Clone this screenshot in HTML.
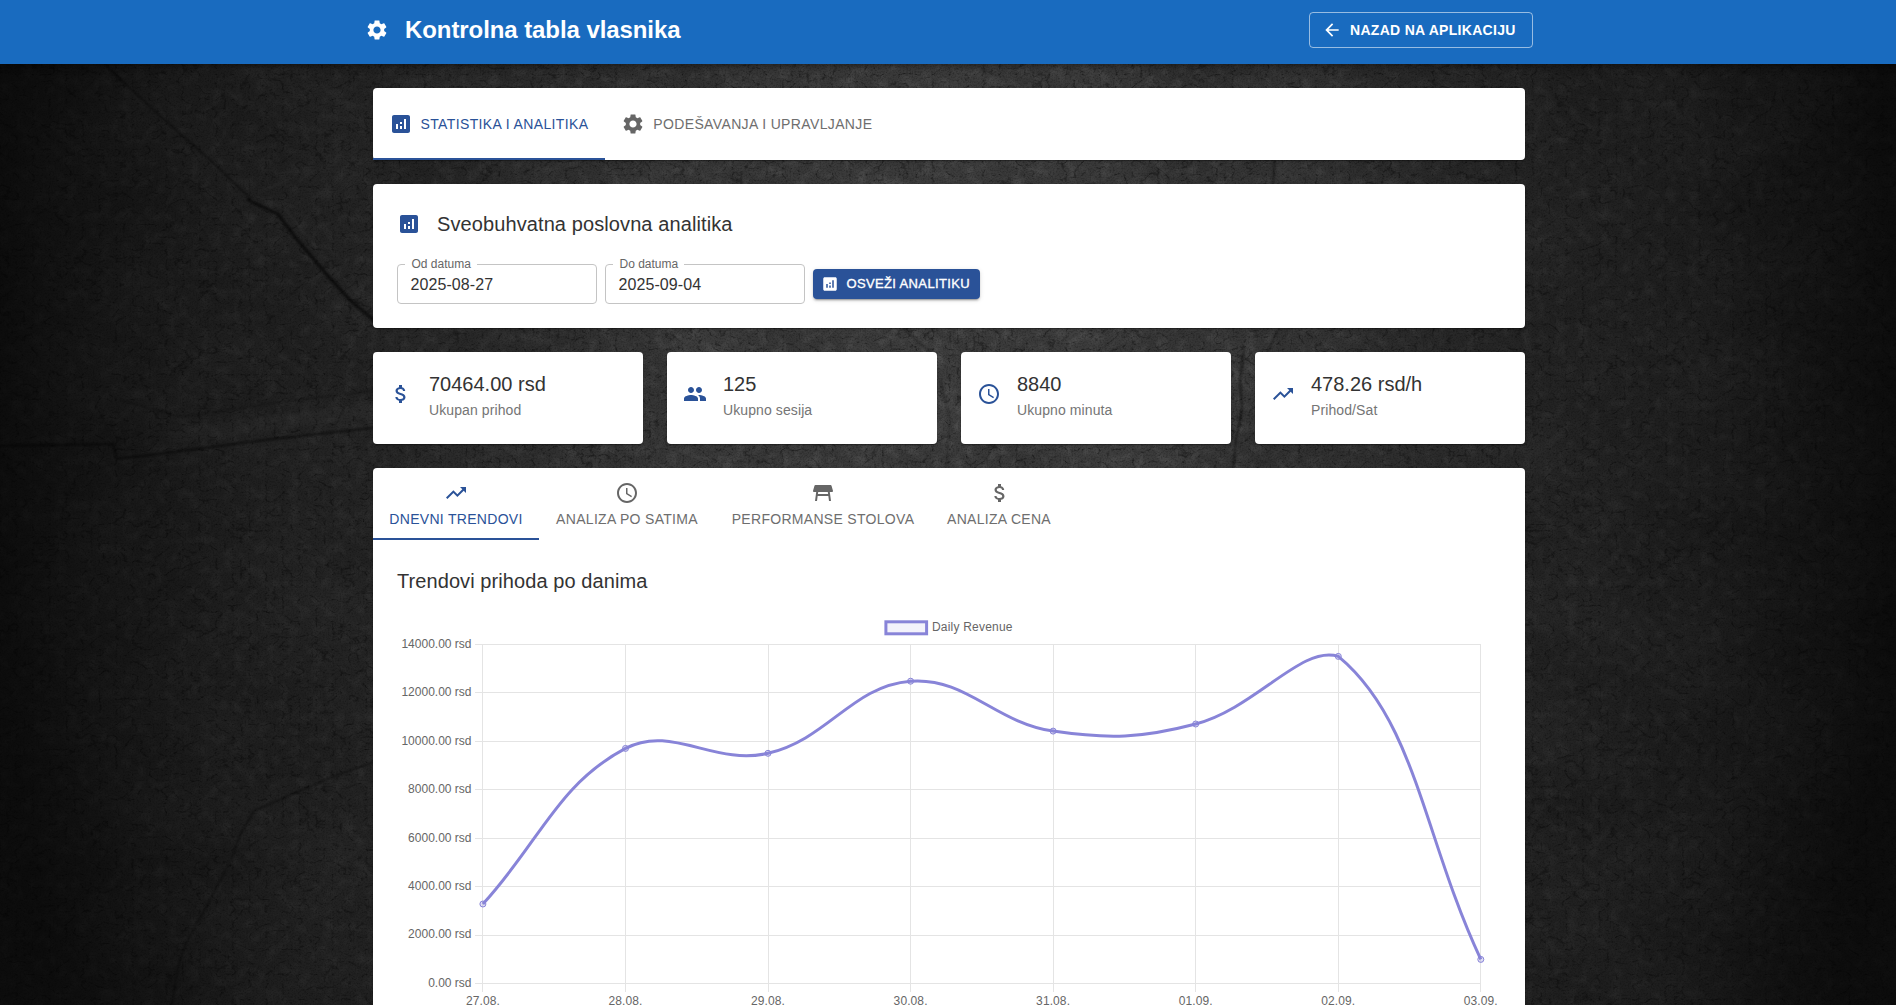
<!DOCTYPE html>
<html><head><meta charset="utf-8">
<style>
*{box-sizing:border-box;margin:0;padding:0}
html,body{width:1896px;height:1005px;overflow:hidden}
body{font-family:"Liberation Sans",sans-serif;background:#232323;position:relative}
#bg{position:absolute;left:0;top:0;width:1896px;height:1005px}
.abs{position:absolute}
.hdr{position:absolute;left:0;top:0;width:1896px;height:64px;background:#196bbf;box-shadow:0 2px 4px -1px rgba(0,0,0,.2),0 4px 5px 0 rgba(0,0,0,.14),0 1px 10px 0 rgba(0,0,0,.12)}
.title{position:absolute;left:405px;top:15px;font-size:24px;font-weight:bold;color:#fff;line-height:30px;white-space:nowrap;letter-spacing:-.08px}
.backbtn{position:absolute;left:1309px;top:12px;width:224px;height:36px;border:1px solid rgba(255,255,255,.55);border-radius:4px}
.backbtn span{position:absolute;left:40px;top:9px;font-size:14px;font-weight:bold;color:#fff;line-height:17px;letter-spacing:.3px;white-space:nowrap}
.card{position:absolute;background:#fff;border-radius:4px;box-shadow:0 2px 1px -1px rgba(0,0,0,.2),0 1px 1px 0 rgba(0,0,0,.14),0 1px 3px 0 rgba(0,0,0,.12)}
.txt{position:absolute;white-space:nowrap;line-height:1}
svg.ic{position:absolute;display:block}
.t14{font-size:14px}
.fld{position:absolute;width:200px;height:40px;border:1px solid #c4c4c4;border-radius:4px}
.fld .lbl{position:absolute;left:7.3px;top:-8px;padding:0 6.2px;background:#fff;font-size:12px;line-height:14px;color:#666;white-space:nowrap}
.fld .val{position:absolute;left:12.5px;top:12px;font-size:16px;letter-spacing:.08px;line-height:16px;color:#333;white-space:nowrap}
.btn{position:absolute;width:167px;height:30px;background:#2a5298;border-radius:4px;box-shadow:0 3px 1px -2px rgba(0,0,0,.2),0 2px 2px 0 rgba(0,0,0,.14),0 1px 5px 0 rgba(0,0,0,.12)}
svg text{font-family:"Liberation Sans",sans-serif}

</style></head><body>
<svg id="bg" width="1896" height="1005" viewBox="0 0 1896 1005">
  <defs>
    <filter id="stone" x="0" y="0" width="100%" height="100%" color-interpolation-filters="sRGB">
      <feTurbulence type="fractalNoise" baseFrequency="0.008 0.012" numOctaves="3" seed="7" result="n"/>
      <feColorMatrix in="n" type="matrix" values="0.08 0 0 0 0.2  0.08 0 0 0 0.2  0.08 0 0 0 0.2  0 0 0 0 1"/>
    </filter>
    <filter id="veins" x="0" y="0" width="100%" height="100%" color-interpolation-filters="sRGB">
      <feTurbulence type="turbulence" baseFrequency="0.06 0.08" numOctaves="3" seed="4" result="t"/>
      <feColorMatrix in="t" type="matrix" values="0 0 0 0 0  0 0 0 0 0  0 0 0 0 0  -2.6 0 0 0 0.42"/>
    </filter>
    <filter id="hl" x="0" y="0" width="100%" height="100%" color-interpolation-filters="sRGB">
      <feTurbulence type="fractalNoise" baseFrequency="0.09" numOctaves="2" seed="21" result="t"/>
      <feColorMatrix in="t" type="matrix" values="0 0 0 0 1  0 0 0 0 1  0 0 0 0 1  0.22 0 0 0 -0.1"/>
    </filter>
    <filter id="grain" x="0" y="0" width="100%" height="100%" color-interpolation-filters="sRGB">
      <feTurbulence type="fractalNoise" baseFrequency="0.6" numOctaves="2" seed="11" result="g"/>
      <feColorMatrix in="g" type="matrix" values="0 0 0 0 0  0 0 0 0 0  0 0 0 0 0  0.6 0 0 0 -0.25"/>
    </filter>
    <filter id="soft"><feGaussianBlur stdDeviation="0.9"/></filter>
    <radialGradient id="vig" gradientUnits="userSpaceOnUse" cx="948" cy="420" r="948" gradientTransform="translate(948 420) scale(1 1.8) translate(-948 -420)">
      <stop offset="0" stop-color="#000" stop-opacity="0"/>
      <stop offset=".3" stop-color="#000" stop-opacity=".12"/>
      <stop offset=".5" stop-color="#000" stop-opacity=".32"/>
      <stop offset=".61" stop-color="#000" stop-opacity=".41"/>
      <stop offset=".8" stop-color="#000" stop-opacity=".53"/>
      <stop offset=".9" stop-color="#000" stop-opacity=".66"/>
      <stop offset="1" stop-color="#000" stop-opacity=".8"/>
    </radialGradient>
  </defs>
  <rect width="1896" height="1005" filter="url(#stone)"/>
  <rect width="1896" height="1005" filter="url(#veins)"/>
  <rect width="1896" height="1005" filter="url(#hl)"/>
  <rect width="1896" height="1005" filter="url(#grain)"/>
  <g fill="none" stroke-linecap="round" stroke-linejoin="round" filter="url(#soft)">
    <path d="M80 40 L122 81 L158 114 L209 159 L250 198" stroke="rgba(0,0,0,.55)" stroke-width="1.6"/>
    <path d="M259 192 L290 178 L314 162" stroke="rgba(255,255,255,.05)" stroke-width="3"/>
    <path d="M248 200 L278 214 L295 237 L328 276 L351 301 L376 322" stroke="rgba(0,0,0,.6)" stroke-width="3.5"/>
    <path d="M256 196 L284 208 L302 230 L334 268 L356 292 L378 310" stroke="rgba(255,255,255,.06)" stroke-width="2"/>
    <path d="M0 446 L113 444 L117 459 L181 451 L265 440 L372 428" stroke="rgba(0,0,0,.5)" stroke-width="2.5"/>
    <path d="M120 400 L181 417 L280 402 L372 391" stroke="rgba(0,0,0,.3)" stroke-width="1.5"/>
    <path d="M181 436 L265 424 L372 410" stroke="rgba(255,255,255,.04)" stroke-width="14"/>
    <path d="M376 761 L330 778 L290 795 L254 811 L240 835 L232 858 L210 900 L185 945 L178 967 L172 1005" stroke="rgba(0,0,0,.5)" stroke-width="1.5"/>
    <path d="M1275 150 L1274 168 L1273 186" stroke="rgba(0,0,0,.5)" stroke-width="1.5"/>
    <path d="M1278 330 L1272 342 L1268 352" stroke="rgba(0,0,0,.5)" stroke-width="1.5"/>
    <path d="M1244 350 L1240 380 L1242 410 L1236 440 L1233 470" stroke="rgba(0,0,0,.55)" stroke-width="1.8"/>
    <path d="M905 330 L930 352" stroke="rgba(0,0,0,.4)" stroke-width="1.5"/>
    <path d="M940 380 L950 420 L946 468" stroke="rgba(0,0,0,.35)" stroke-width="1.2"/>
  </g>
  <rect width="1896" height="1005" fill="url(#vig)"/>
</svg>

<div class="hdr">
  <svg class="ic" style="left:365px;top:18px" width="24" height="24" viewBox="0 0 24 24"><path fill="#fff" d="M19.14 12.94c.04-.3.06-.61.06-.94 0-.32-.02-.64-.07-.94l2.03-1.58c.18-.14.23-.41.12-.61l-1.92-3.32c-.12-.22-.37-.29-.59-.22l-2.39.96c-.5-.38-1.030-.7-1.62-.94l-.36-2.54c-.04-.24-.24-.41-.48-.41h-3.84c-.24 0-.43.17-.47.41l-.36 2.54c-.59.24-1.13.57-1.62.94l-2.39-.96c-.22-.08-.47 0-.59.22L2.74 8.87c-.12.21-.08.47.12.61l2.03 1.58c-.05.3-.09.63-.09.94s.02.64.07.94l-2.03 1.58c-.18.14-.23.41-.12.61l1.92 3.32c.12.22.37.29.59.22l2.39-.96c.5.38 1.03.7 1.62.94l.36 2.54c.05.24.24.41.48.41h3.84c.24 0 .44-.17.47-.41l.36-2.54c.59-.24 1.13-.56 1.62-.94l2.39.96c.22.08.47 0 .59-.22l1.920-3.32c.12-.22.07-.47-.12-.61l-2.01-1.58zM12 15.6c-1.98 0-3.6-1.62-3.6-3.6s1.62-3.6 3.6-3.6 3.6 1.62 3.6 3.6-1.62 3.6-3.6 3.6z"/></svg>
  <div class="title">Kontrolna tabla vlasnika</div>
  <div class="backbtn">
    <svg class="ic" style="left:12px;top:7px" width="20" height="20" viewBox="0 0 24 24"><path fill="#fff" d="M20 11H7.83l5.59-5.59L12 4l-8 8 8 8 1.41-1.41L7.83 13H20v-2z"/></svg>
    <span>NAZAD NA APLIKACIJU</span>
  </div>
</div>

<div class="card" style="left:373px;top:88px;width:1152px;height:72px">
  <svg class="ic" style="left:16px;top:24px" width="24" height="24" viewBox="0 0 24 24"><path fill="#2a5298" d="M19 3H5c-1.1 0-2 .9-2 2v14c0 1.1.9 2 2 2h14c1.1 0 2-.9 2-2V5c0-1.1-.9-2-2-2zM9 17H7v-5h2v5zm4 0h-2v-3h2v3zm0-5h-2v-2h2v2zm4 5h-2V7h2v10z"/></svg>
  <div class="txt t14" style="left:47.5px;top:29px;color:#2a5298;letter-spacing:.37px">STATISTIKA I ANALITIKA</div>
  <div class="abs" style="left:0;top:70px;width:232px;height:2px;background:#2a5298"></div>
  <svg class="ic" style="left:248px;top:24px" width="24" height="24" viewBox="0 0 24 24"><path fill="#666" d="M19.14 12.94c.04-.3.06-.61.06-.94 0-.32-.02-.64-.07-.94l2.03-1.58c.18-.14.23-.41.12-.61l-1.92-3.32c-.12-.22-.37-.29-.59-.22l-2.39.96c-.5-.38-1.03-.7-1.62-.94l-.36-2.54c-.04-.24-.24-.41-.48-.41h-3.84c-.24 0-.43.17-.47.41l-.36 2.54c-.59.24-1.13.57-1.62.94l-2.39-.96c-.22-.08-.47 0-.59.22L2.74 8.87c-.12.21-.08.47.12.61l2.03 1.58c-.05.3-.09.63-.09.94s.02.64.07.94l-2.03 1.58c-.18.14-.23.41-.12.61l1.92 3.32c.12.22.37.29.59.22l2.39-.96c.5.38 1.03.7 1.62.94l.36 2.54c.05.24.24.41.48.41h3.84c.24 0 .44-.17.47-.41l.36-2.54c.59-.24 1.13-.56 1.62-.94l2.39.96c.22.08.47 0 .59-.22l1.92-3.32c.12-.22.07-.47-.12-.61l-2.01-1.58zM12 15.6c-1.98 0-3.6-1.62-3.6-3.6s1.62-3.6 3.6-3.6 3.6 1.62 3.6 3.6-1.62 3.6-3.6 3.6z"/></svg>
  <div class="txt t14" style="left:280.3px;top:29px;color:#6e6e6e;letter-spacing:.36px">PODEŠAVANJA I UPRAVLJANJE</div>
</div>
<div class="card" style="left:373px;top:184px;width:1152px;height:144px">
  <svg class="ic" style="left:24px;top:28px" width="24" height="24" viewBox="0 0 24 24"><path fill="#2a5298" d="M19 3H5c-1.1 0-2 .9-2 2v14c0 1.1.9 2 2 2h14c1.1 0 2-.9 2-2V5c0-1.1-.9-2-2-2zM9 17H7v-5h2v5zm4 0h-2v-3h2v3zm0-5h-2v-2h2v2zm4 5h-2V7h2v10z"/></svg>
  <div class="txt" style="left:64px;top:29.5px;font-size:20px;color:#333;letter-spacing:.1px">Sveobuhvatna poslovna analitika</div>
  <div class="fld" style="left:24px;top:80px"><div class="lbl">Od datuma</div><div class="val">2025-08-27</div></div>
  <div class="fld" style="left:232px;top:80px"><div class="lbl">Do datuma</div><div class="val">2025-09-04</div></div>
  <div class="btn" style="left:440px;top:85px">
    <svg class="ic" style="left:8px;top:6px" width="18" height="18" viewBox="0 0 24 24"><path fill="#fff" d="M19 3H5c-1.1 0-2 .9-2 2v14c0 1.1.9 2 2 2h14c1.1 0 2-.9 2-2V5c0-1.1-.9-2-2-2zM9 17H7v-5h2v5zm4 0h-2v-3h2v3zm0-5h-2v-2h2v2zm4 5h-2V7h2v10z"/></svg>
    <div class="txt" style="left:33.5px;top:7.6px;font-size:13px;color:#fff;letter-spacing:.36px;-webkit-text-stroke:.35px #fff">OSVEŽI ANALITIKU</div>
  </div>
</div>
<div class="card" style="left:373px;top:352px;width:270px;height:92px">
  <svg class="ic" style="left:16px;top:30px" width="24" height="24" viewBox="0 0 24 24"><path fill="#2a5298" d="M11.8 10.9c-2.27-.59-3-1.2-3-2.15 0-1.09 1.01-1.85 2.7-1.85 1.78 0 2.44.85 2.5 2.1h2.21c-.07-1.72-1.12-3.3-3.21-3.81V3h-3v2.16c-1.94.42-3.5 1.68-3.5 3.61 0 2.31 1.91 3.46 4.7 4.13 2.5.6 3 1.48 3 2.41 0 .69-.49 1.79-2.7 1.79-2.06 0-2.870-.92-2.98-2.1h-2.2c.12 2.19 1.76 3.42 3.68 3.83V21h3v-2.15c1.95-.37 3.5-1.5 3.5-3.55 0-2.84-2.43-3.81-4.7-4.4z"/></svg>
  <div class="txt" style="left:56px;top:22px;font-size:20px;color:#333">70464.00 rsd</div>
  <div class="txt" style="left:56px;top:51px;font-size:14px;color:#757575;letter-spacing:.1px">Ukupan prihod</div>
</div>
<div class="card" style="left:667px;top:352px;width:270px;height:92px">
  <svg class="ic" style="left:16px;top:30px" width="24" height="24" viewBox="0 0 24 24"><path fill="#2a5298" d="M16 11c1.66 0 2.99-1.34 2.99-3S17.66 5 16 5c-1.66 0-3 1.34-3 3s1.34 3 3 3zm-8 0c1.66 0 2.99-1.34 2.99-3S9.66 5 8 5C6.34 5 5 6.340 5 8s1.34 3 3 3zm0 2c-2.33 0-7 1.17-7 3.5V19h14v-2.5c0-2.33-4.67-3.5-7-3.5zm8 0c-.29 0-.62.02-.97.05 1.16.84 1.97 1.97 1.97 3.45V19h6v-2.5c0-2.33-4.67-3.5-7-3.5z"/></svg>
  <div class="txt" style="left:56px;top:22px;font-size:20px;color:#333">125</div>
  <div class="txt" style="left:56px;top:51px;font-size:14px;color:#757575;letter-spacing:.1px">Ukupno sesija</div>
</div>
<div class="card" style="left:961px;top:352px;width:270px;height:92px">
  <svg class="ic" style="left:16px;top:30px" width="24" height="24" viewBox="0 0 24 24"><path fill="#2a5298" d="M11.99 2C6.47 2 2 6.48 2 12s4.47 10 9.99 10C17.52 22 22 17.52 22 12S17.52 2 11.99 2zM12 20c-4.42 0-8-3.58-8-8s3.58-8 8-8 8 3.58 8 8-3.58 8-8 8zm.5-13H11v6l5.25 3.15.75-1.23-4.5-2.67z"/></svg>
  <div class="txt" style="left:56px;top:22px;font-size:20px;color:#333">8840</div>
  <div class="txt" style="left:56px;top:51px;font-size:14px;color:#757575;letter-spacing:.1px">Ukupno minuta</div>
</div>
<div class="card" style="left:1255px;top:352px;width:270px;height:92px">
  <svg class="ic" style="left:16px;top:30px" width="24" height="24" viewBox="0 0 24 24"><path fill="#2a5298" d="M16 6l2.29 2.29-4.88 4.88-4-4L2 16.59 3.41 18l6-6 4 4 6.3-6.29L22 12V6z"/></svg>
  <div class="txt" style="left:56px;top:22px;font-size:20px;color:#333">478.26 rsd/h</div>
  <div class="txt" style="left:56px;top:51px;font-size:14px;color:#757575;letter-spacing:.1px">Prihod/Sat</div>
</div>
<div class="card" style="left:373px;top:468px;width:1152px;height:600px">
  <svg class="ic" style="left:71px;top:13px" width="24" height="24" viewBox="0 0 24 24"><path fill="#2a5298" d="M16 6l2.29 2.29-4.88 4.88-4-4L2 16.59 3.41 18l6-6 4 4 6.3-6.29L22 12V6z"/></svg><div class="txt t14 ctab" style="left:-67px;top:44px;width:300px;text-align:center;color:#2a5298;letter-spacing:.3px">DNEVNI TRENDOVI</div>
<svg class="ic" style="left:242px;top:13px" width="24" height="24" viewBox="0 0 24 24"><path fill="#666" d="M11.99 2C6.47 2 2 6.48 2 12s4.47 10 9.99 10C17.52 22 22 17.52 22 12S17.52 2 11.99 2zM12 20c-4.42 0-8-3.58-8-8s3.58-8 8-8 8 3.58 8 8-3.58 8-8 8zm.5-13H11v6l5.25 3.15.75-1.23-4.5-2.67z"/></svg><div class="txt t14 ctab" style="left:104px;top:44px;width:300px;text-align:center;color:#6e6e6e;letter-spacing:.3px">ANALIZA PO SATIMA</div>
<svg class="ic" style="left:438px;top:13px" width="24" height="24" viewBox="0 0 24 24"><path fill="#666" d="M21.96 9.73l-1.43-5C20.41 4.3 20.02 4 19.57 4H4.43c-.45 0-.84.3-.96.73l-1.43 5c-.18.63.3 1.27.96 1.27h2.2L4 20h2l.67-5h10.67l.66 5h2l-1.2-9H21c.66 0 1.14-.64.96-1.27zM6.93 13l.27-2h9.6l.27 2H6.93z"/></svg><div class="txt t14 ctab" style="left:300px;top:44px;width:300px;text-align:center;color:#6e6e6e;letter-spacing:.3px">PERFORMANSE STOLOVA</div>
<svg class="ic" style="left:615px;top:13px" width="24" height="24" viewBox="0 0 24 24"><path fill="#666" d="M11.8 10.9c-2.27-.59-3-1.2-3-2.15 0-1.09 1.01-1.85 2.7-1.85 1.78 0 2.44.85 2.5 2.1h2.21c-.07-1.72-1.12-3.3-3.21-3.81V3h-3v2.16c-1.94.42-3.5 1.68-3.5 3.61 0 2.31 1.91 3.46 4.7 4.13 2.5.6 3 1.48 3 2.41 0 .69-.49 1.79-2.7 1.79-2.06 0-2.870-.92-2.98-2.1h-2.2c.12 2.19 1.76 3.42 3.68 3.83V21h3v-2.15c1.95-.37 3.5-1.5 3.5-3.55 0-2.84-2.43-3.81-4.7-4.4z"/></svg><div class="txt t14 ctab" style="left:476px;top:44px;width:300px;text-align:center;color:#6e6e6e;letter-spacing:.3px">ANALIZA CENA</div>

  <div class="abs" style="left:0;top:70px;width:166px;height:2px;background:#2a5298"></div>
  <div class="txt" style="left:24px;top:102.5px;font-size:20px;color:#333;letter-spacing:.08px">Trendovi prihoda po danima</div>
</div>
<!--CHART--><svg class="ic" style="left:0;top:0" width="1896" height="1005" viewBox="0 0 1896 1005">
<line x1="475" y1="983.5" x2="1481" y2="983.5" stroke="#e4e4e4" stroke-width="1"/>
<line x1="475" y1="935.5" x2="1481" y2="935.5" stroke="#e4e4e4" stroke-width="1"/>
<line x1="475" y1="886.5" x2="1481" y2="886.5" stroke="#e4e4e4" stroke-width="1"/>
<line x1="475" y1="838.5" x2="1481" y2="838.5" stroke="#e4e4e4" stroke-width="1"/>
<line x1="475" y1="789.5" x2="1481" y2="789.5" stroke="#e4e4e4" stroke-width="1"/>
<line x1="475" y1="741.5" x2="1481" y2="741.5" stroke="#e4e4e4" stroke-width="1"/>
<line x1="475" y1="692.5" x2="1481" y2="692.5" stroke="#e4e4e4" stroke-width="1"/>
<line x1="475" y1="644.5" x2="1481" y2="644.5" stroke="#e4e4e4" stroke-width="1"/>
<line x1="482.5" y1="644" x2="482.5" y2="992" stroke="#e4e4e4" stroke-width="1"/>
<line x1="625.5" y1="644" x2="625.5" y2="992" stroke="#e4e4e4" stroke-width="1"/>
<line x1="768.5" y1="644" x2="768.5" y2="992" stroke="#e4e4e4" stroke-width="1"/>
<line x1="910.5" y1="644" x2="910.5" y2="992" stroke="#e4e4e4" stroke-width="1"/>
<line x1="1053.5" y1="644" x2="1053.5" y2="992" stroke="#e4e4e4" stroke-width="1"/>
<line x1="1195.5" y1="644" x2="1195.5" y2="992" stroke="#e4e4e4" stroke-width="1"/>
<line x1="1338.5" y1="644" x2="1338.5" y2="992" stroke="#e4e4e4" stroke-width="1"/>
<line x1="1480.5" y1="644" x2="1480.5" y2="992" stroke="#e4e4e4" stroke-width="1"/>
<path d="M482.9 904.0 C539.9 841.8 557.4 784.4 625.5 748.4 C671.5 724.1 714.2 766.0 768.0 753.3 C828.3 739.1 852.0 685.8 910.6 681.2 C966.0 676.9 994.5 722.3 1053.1 731.1 C1108.6 739.4 1141.5 738.2 1195.7 724.0 C1255.6 708.3 1301.7 644.5 1338.3 656.4 C1415.8 720.4 1423.8 838.2 1480.8 959.4" fill="none" stroke="#8884d8" stroke-width="3"/>
<circle cx="482.9" cy="904.0" r="3" fill="rgba(136,132,216,0.25)" stroke="#8884d8" stroke-width="1"/>
<circle cx="625.5" cy="748.4" r="3" fill="rgba(136,132,216,0.25)" stroke="#8884d8" stroke-width="1"/>
<circle cx="768.0" cy="753.3" r="3" fill="rgba(136,132,216,0.25)" stroke="#8884d8" stroke-width="1"/>
<circle cx="910.6" cy="681.2" r="3" fill="rgba(136,132,216,0.25)" stroke="#8884d8" stroke-width="1"/>
<circle cx="1053.1" cy="731.1" r="3" fill="rgba(136,132,216,0.25)" stroke="#8884d8" stroke-width="1"/>
<circle cx="1195.7" cy="724.0" r="3" fill="rgba(136,132,216,0.25)" stroke="#8884d8" stroke-width="1"/>
<circle cx="1338.3" cy="656.4" r="3" fill="rgba(136,132,216,0.25)" stroke="#8884d8" stroke-width="1"/>
<circle cx="1480.8" cy="959.4" r="3" fill="rgba(136,132,216,0.25)" stroke="#8884d8" stroke-width="1"/>
<text x="471.5" y="986.8" text-anchor="end" font-size="12" fill="#666">0.00 rsd</text>
<text x="471.5" y="938.4" text-anchor="end" font-size="12" fill="#666">2000.00 rsd</text>
<text x="471.5" y="889.9" text-anchor="end" font-size="12" fill="#666">4000.00 rsd</text>
<text x="471.5" y="841.5" text-anchor="end" font-size="12" fill="#666">6000.00 rsd</text>
<text x="471.5" y="793.1" text-anchor="end" font-size="12" fill="#666">8000.00 rsd</text>
<text x="471.5" y="744.7" text-anchor="end" font-size="12" fill="#666">10000.00 rsd</text>
<text x="471.5" y="696.2" text-anchor="end" font-size="12" fill="#666">12000.00 rsd</text>
<text x="471.5" y="647.8" text-anchor="end" font-size="12" fill="#666">14000.00 rsd</text>
<text x="482.9" y="1005" text-anchor="middle" font-size="12" fill="#666" letter-spacing=".1">27.08.</text>
<text x="625.5" y="1005" text-anchor="middle" font-size="12" fill="#666" letter-spacing=".1">28.08.</text>
<text x="768.0" y="1005" text-anchor="middle" font-size="12" fill="#666" letter-spacing=".1">29.08.</text>
<text x="910.6" y="1005" text-anchor="middle" font-size="12" fill="#666" letter-spacing=".1">30.08.</text>
<text x="1053.1" y="1005" text-anchor="middle" font-size="12" fill="#666" letter-spacing=".1">31.08.</text>
<text x="1195.7" y="1005" text-anchor="middle" font-size="12" fill="#666" letter-spacing=".1">01.09.</text>
<text x="1338.3" y="1005" text-anchor="middle" font-size="12" fill="#666" letter-spacing=".1">02.09.</text>
<text x="1480.8" y="1005" text-anchor="middle" font-size="12" fill="#666" letter-spacing=".1">03.09.</text>
<rect x="885.9" y="621.8" width="40.7" height="12" fill="rgba(136,132,216,0.1)" stroke="#8884d8" stroke-width="3"/>
<text x="932" y="630.8" font-size="12" fill="#666" letter-spacing=".2">Daily Revenue</text>
</svg><!--/CHART-->
</body></html>
